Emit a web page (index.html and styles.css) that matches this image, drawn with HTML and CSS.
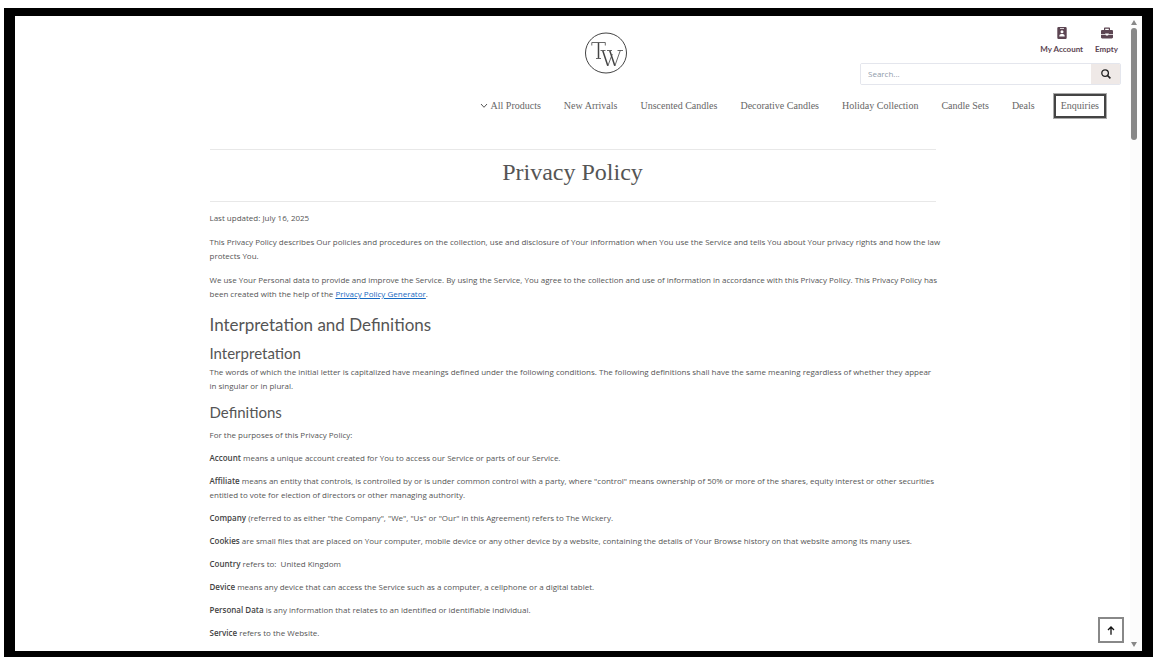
FILE: index.html
```html
<!DOCTYPE html>
<html lang="en">
<head>
<meta charset="utf-8">
<meta name="viewport" content="width=device-width, initial-scale=1">
<title>Privacy Policy</title>
<link rel="stylesheet" href="styles.css">
</head>
<body>
<div class="frame">
  <div class="page">
    <header class="header">
      <div class="brand-row">
        <a class="logo" href="#" aria-label="The Wickery">
          <svg width="44" height="44" viewBox="0 0 44 44" fill="none" stroke="#444">
            <ellipse cx="22" cy="22" rx="20.5" ry="20"/>
            <path stroke-width="1.500" d="M14.500 11.800v15.500M25.800 19.700l5 15M18.800 19.700l5 15"/>
            <path stroke-width=".8" d="M7.800 14.500v-3h13.500v3M12 27.500h5M16.500 19.500h5M23 19.500h5M33.500 19.500h5.500M23.800 35l4.500-12M30.800 35l5.500-15.500"/>
          </svg>
        </a>
        <div class="tools">
          <div class="account-links">
            <a class="account-link" href="#">
              <svg width="12" height="12" viewBox="0 0 12 12"><path fill="#5c4552" fill-rule="evenodd" d="M2.500 0h7a1.200 1.200 0 0 1 1.200 1.200v9.600A1.200 1.200 0 0 1 9.500 12h-7a1.200 1.200 0 0 1-1.200-1.200V1.200A1.200 1.200 0 0 1 2.500 0zM4 1.200v.9h4v-.9zM6 3.200a1.500 1.500 0 1 0 0 3 1.500 1.500 0 0 0 0-3zM3.300 9.400h5.400c0-1.500-.9-2.300-2-2.300H5.300c-1.100 0-2 .8-2 2.300z"/></svg>
              <span>My Account</span>
            </a>
            <a class="account-link" href="#">
              <svg width="12" height="12" viewBox="0 0 12 12"><path fill="#5c4552" fill-rule="evenodd" d="M3 3V1.600C3 1 3.400.6 4 .6h4c.6 0 1 .4 1 1V3h1.800c.7 0 1.200.5 1.200 1.200v2.800H7.800V6.400H4.200V7H0V4.200C0 3.500.5 3 1.200 3zm1.200 0h3.600V1.800H4.200zM0 7.800h4.800v.8h2.400v-.8H12v2.400c0 .7-.5 1.200-1.200 1.200H1.200C.5 11.400 0 10.900 0 10.200z"/></svg>
              <span>Empty</span>
            </a>
          </div>
          <form class="search" role="search">
            <input class="search-input" type="search" placeholder="Search..." aria-label="Search">
            <button class="search-button" type="button" aria-label="Search">
              <svg width="10" height="10" viewBox="0 0 10 10" fill="none" stroke="#222" stroke-width="1.300"><circle cx="4.100" cy="4.100" r="3.300"/><path d="M6.500 6.500L9.400 9.400" stroke-width="1.600"/></svg>
            </button>
          </form>
        </div>
      </div>
      <nav class="nav">
        <a class="nav-link" href="#"><svg class="chevron" width="8" height="6" viewBox="0 0 8 6"><path d="M1 1l3 3.300L7 1" fill="none" stroke="#555"/></svg>All Products</a>
        <a class="nav-link" href="#">New Arrivals</a>
        <a class="nav-link" href="#">Unscented Candles</a>
        <a class="nav-link" href="#">Decorative Candles</a>
        <a class="nav-link" href="#">Holiday Collection</a>
        <a class="nav-link" href="#">Candle Sets</a>
        <a class="nav-link" href="#">Deals</a>
        <a class="nav-link nav-boxed" href="#">Enquiries</a>
      </nav>
    </header>
    <main class="content">
      <h1 class="title">Privacy Policy</h1>
      <div class="intro">
        <p>Last updated: July 16, 2025</p>
        <p>This Privacy Policy describes Our policies and procedures on the collection, use and disclosure of Your information when You use the Service and tells You about Your privacy rights and how the law protects You.</p>
        <p>We use Your Personal data to provide and improve the Service. By using the Service, You agree to the collection and use of information in accordance with this Privacy Policy. This Privacy Policy has been created with the help of the <a class="text-link" href="#">Privacy Policy Generator</a>.</p>
      </div>
      <h2 class="section-title">Interpretation and Definitions</h2>
      <h3 class="subsection-title">Interpretation</h3>
      <p>The words of which the initial letter is capitalized have meanings defined under the following conditions. The following definitions shall have the same meaning regardless of whether they appear in&nbsp;singular or in plural.</p>
      <h3 class="subsection-title">Definitions</h3>
      <div class="definitions">
        <p>For the purposes of this Privacy Policy:</p>
        <p><strong>Account</strong> means a unique account created for You to access our Service or parts of our Service.</p>
        <p><strong>Affiliate</strong> means an entity that controls, is controlled by or is under common control with a party, where "control" means ownership of 50% or more of the shares, equity interest or other securities entitled to vote for election of directors or other managing authority.</p>
        <p><strong>Company</strong> (referred to as either "the Company", "We", "Us" or "Our" in this Agreement) refers to The Wickery.</p>
        <p><strong>Cookies</strong> are small files that are placed on Your computer, mobile device or any other device by a website, containing the details of Your Browse history on that website among its many uses.</p>
        <p><strong>Country</strong> refers to:&nbsp; United Kingdom</p>
        <p><strong>Device</strong> means any device that can access the Service such as a computer, a cellphone or a digital tablet.</p>
        <p><strong>Personal Data</strong> is any information that relates to an identified or identifiable individual.</p>
        <p><strong>Service</strong> refers to the Website.</p>
      </div>
    </main>
  </div>
  <div class="scrollbar" aria-hidden="true">
    <span class="arrow-up"></span>
    <span class="thumb"></span>
    <span class="arrow-down"></span>
  </div>
  <button class="to-top" type="button" aria-label="Back to top">
    <svg width="8" height="9" viewBox="0 0 8 9" fill="none" stroke="#111" stroke-width="1.300"><path d="M4 8.700V1M1 4l3-3 3 3"/></svg>
  </button>
</div>
</body>
</html>
```
FILE: styles.css
```css
* { box-sizing: border-box; }
body {
  margin: 0;
  padding: 8px 9px 6px 4px;
  height: 100vh;
  overflow: hidden;
  background: #fff;
  color: #555;
  font: 8px/14px "Open Sans", "Noto Sans", sans-serif;
}
p, h1, h2, h3 { margin: 0; }
p { margin-right: -8px; }
a { color: inherit; text-decoration: none; }
svg { display: block; }

.frame {
  position: relative;
  display: flex;
  height: 100%;
  border: solid #000;
  border-width: 8px 11px 6px;
  overflow: hidden;
}
.page { flex: 1; min-width: 0; overflow: hidden; }

.header { padding: 11px 9px 0; }
.brand-row {
  display: grid;
  grid-template-columns: 1fr auto 1fr;
}
.logo { grid-column: 2; margin: 4px 0 0 66px; }
.tools {
  display: flex;
  flex-direction: column;
  align-items: flex-end;
  gap: 7px;
}
.account-links { display: flex; gap: 12px; padding-right: 3px; }
.account-link {
  display: flex;
  flex-direction: column;
  align-items: center;
  gap: 3px;
  color: #5c4552;
  font-family: Lato, sans-serif;
  font-weight: 700;
}
.search {
  display: flex;
  width: 261px;
  height: 22px;
  border: 1px solid #e4e6ed;
  border-radius: 2px;
  overflow: hidden;
}
.search-input {
  flex: 1;
  min-width: 0;
  padding: 0 7px;
  border: 0;
  background: #fff;
  font: inherit;
}
.search-input::placeholder { color: #8f9baa; opacity: 1; }
.search-button {
  display: grid;
  place-items: center;
  width: 29px;
  padding: 0;
  border: 0;
  background: #efe9e7;
}

.nav {
  display: flex;
  justify-content: flex-end;
  align-items: center;
  gap: 23px;
  margin-top: 9px;
  padding-right: 15px;
  color: #666;
  font: 10px/16px "Liberation Serif", serif;
  white-space: nowrap;
}
.nav-link { display: flex; align-items: center; gap: 3px; }
.nav-boxed {
  margin-left: -4px;
  padding: 2px 5px;
  border: 2px solid #444;
  outline: 1px solid #aaa;
}

.content { width: 726px; max-width: 100%; margin: 31px auto 0; }
.title {
  padding: 6px 0 12px;
  border: solid #e8e8e8;
  border-width: 1px 0;
  color: #555;
  font: 24px/33px "Liberation Serif", serif;
  text-align: center;
}
.intro { display: flex; flex-direction: column; gap: 10px; padding-top: 9px; }
.text-link { color: #1769c2; text-decoration: underline; }
.section-title,
.subsection-title { font-family: Lato, sans-serif; font-weight: 400; }
.section-title { margin-top: 13px; font-size: 17px; line-height: 22px; }
.subsection-title { margin: 7px 0 2px; font-size: 15px; line-height: 20px; }
p + .subsection-title { margin-top: 9px; }
.definitions { display: flex; flex-direction: column; gap: 9px; padding-top: 4px; }
.definitions strong { color: #444; font-weight: 600; }

.scrollbar {
  display: flex;
  flex-direction: column;
  align-items: center;
  width: 12px;
  padding: 4px 4px 4px 0;
  background: #fcfcfc;
}
.thumb { width: 6px; height: 112px; margin-top: 3px; border-radius: 3px; background: #888; }
.arrow-up { border: solid transparent; border-width: 0 3px 5px; border-bottom-color: #888; }
.arrow-down { margin-top: auto; border: solid transparent; border-width: 5px 3px 0; border-top-color: #888; }
.to-top {
  position: absolute;
  right: 18px;
  bottom: 8px;
  display: grid;
  place-items: center;
  width: 26px;
  height: 26px;
  padding: 0;
  border: 2px solid #888;
  background: #fff;
}
```
